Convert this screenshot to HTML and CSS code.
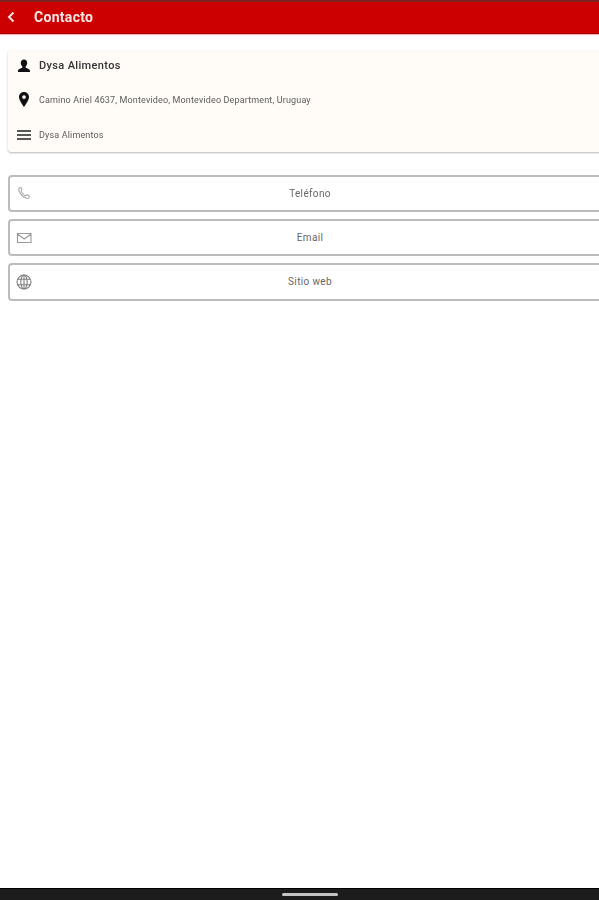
FILE: index.html
```html
<!DOCTYPE html>
<html lang="es">
<head>
<meta charset="utf-8">
<title>Contacto</title>
<link rel="stylesheet" href="styles.css">
</head>
<body>
<div class="app">
  <header class="appbar">
    <svg class="back" width="10" height="12" viewBox="0 0 10 12"><path d="M7.500 1.500 3 6l4.500 4.500" fill="none" stroke="#f7e3e3" stroke-width="2"/></svg>
    <h1 class="title">Contacto</h1>
  </header>
  <main class="content">
    <section class="card">
      <div class="row row-name">
        <svg class="icon" width="16" height="16" viewBox="0 0 16 16"><path d="M8 1.500c2 0 3.200 1.500 3.200 3.500 0 1.500-.7 2.800-1.500 3.500v1.200c1.600.7 4.300 1.300 4.300 3.300v1H2v-1c0-2 2.700-2.600 4.300-3.300V8.500C5.500 7.800 4.800 6.500 4.800 5c0-2 1.200-3.500 3.200-3.500z" fill="#111"/></svg>
        <span class="name">Dysa Alimentos</span>
      </div>
      <div class="row row-address">
        <svg class="icon" width="16" height="18" viewBox="0 0 16 18"><path fill-rule="evenodd" d="M8 1c-2.900 0-5 2.200-5 5 0 3.600 5 10 5 10s5-6.400 5-10c0-2.800-2.100-5-5-5zm0 3.200a1.900 1.900 0 1 1 0 3.800 1.900 1.900 0 0 1 0-3.800z" fill="#111"/></svg>
        <span class="detail">Camino Ariel 4637, Montevideo, Montevideo Department, Uruguay</span>
      </div>
      <div class="row row-desc">
        <svg class="icon" width="16" height="12" viewBox="0 0 16 12"><path d="M1 2h14M1 6h14M1 10h14" stroke="#222" stroke-width="1.500" fill="none"/></svg>
        <span class="detail">Dysa Alimentos</span>
      </div>
    </section>
    <div class="actions">
      <button class="action" type="button">
        <svg class="action-icon" width="16" height="16" viewBox="0 0 16 16"><path d="M3.200 2.200c.8-.8 1.800-.7 2.300 0 .5.700.4 1.500-.1 2.100-.4.400-.4.800-.1 1.200.8 1.500 2 3.200 3.400 4 .5.300 .9.300 1.300-.1.700-.6 1.700-.6 2.600.1.900.7.900 1.700.2 2.300-.8.700-1.900.8-2.900.3C7.200 11 4.400 8 3 5c-.4-1-.4-2.100.2-2.800z" fill="none" stroke="#a8a8a8" stroke-width="1.100"/></svg>
        <span class="action-label">Teléfono</span>
      </button>
      <button class="action" type="button">
        <svg class="action-icon" width="16" height="16" viewBox="0 0 16 16"><path d="M1.500 3.500h13.500v9H1.500zM1.500 4l6.750 5L15 4" fill="none" stroke="#9a9a9a" stroke-width="1.100"/></svg>
        <span class="action-label">Email</span>
      </button>
      <button class="action action-last" type="button">
        <svg class="action-icon" width="16" height="16" viewBox="0 0 16 16"><g fill="none" stroke="#808080" stroke-width="1.100"><circle cx="8" cy="8" r="7"/><ellipse cx="8" cy="8" rx="3.200" ry="7"/><path d="M8 1v14M1.600 5.300h12.800M1.600 10.700h12.800"/></g></svg>
        <span class="action-label">Sitio web</span>
      </button>
    </div>
  </main>
  <div class="navbar"><span class="handle"></span></div>
</div>
</body>
</html>
```
FILE: styles.css
```css
* { box-sizing: border-box; }
html, body { margin: 0; height: 100%; overflow: hidden; background: #fff; }
body { font-family: Roboto, "Liberation Sans", sans-serif; }
.app { width: 599px; height: 900px; display: flex; flex-direction: column; overflow: hidden; filter: blur(.5px); }
.appbar {
  height: 34px; flex: none; display: flex; align-items: center; gap: 18px; padding: 0 0 2px 6px;
  background: #cc0000; border-top: 2px solid #7d2020; border-bottom: 1px solid #a80000;
  box-shadow: 0 1px 1px rgba(204, 0, 0, .3);
}
.back { flex: none; }
.title { margin: 0; font-size: 14px; font-weight: 700; letter-spacing: .3px; color: #f9e6e6; }
.content { flex: 1; min-height: 0; padding: 16px 0 0 8px; display: flex; flex-direction: column; gap: 23px; }
.card {
  width: 620px; height: 102px; flex: none; display: flex; flex-direction: column;
  background: #fffbf6; border-radius: 3px; box-shadow: 0 1px 2px rgba(0, 0, 0, .28);
}
.row { display: flex; align-items: center; padding-left: 8px; }
.row-name { height: 31px; }
.row-address { height: 37px; }
.row-desc { height: 34px; }
.icon { flex: none; width: 16px; margin-right: 7px; }
.name { font-size: 11px; font-weight: 500; color: #333; letter-spacing: .35px; }
.detail { font-size: 9px; letter-spacing: .15px; color: #5c5c5c; }
.actions { display: flex; flex-direction: column; gap: 7px; }
.action {
  position: relative; width: 604px; height: 37px; display: flex; align-items: center; justify-content: center;
  padding: 0; background: #fff; border: 2px solid #bcbcbc; border-radius: 4px;
  font-family: inherit; font-size: 10px; letter-spacing: .35px; color: #666;
}
.action-last { height: 38px; padding-bottom: 1px; }
.action-icon { position: absolute; left: 6px; top: 50%; transform: translateY(-50%); }
.navbar { width: 620px; height: 12px; flex: none; display: flex; justify-content: center; align-items: center; background: #1c1c1c; border-top: 1px solid #000; }
.handle { width: 56px; height: 3px; background: #c4c4c4; border-radius: 2px; }
```
